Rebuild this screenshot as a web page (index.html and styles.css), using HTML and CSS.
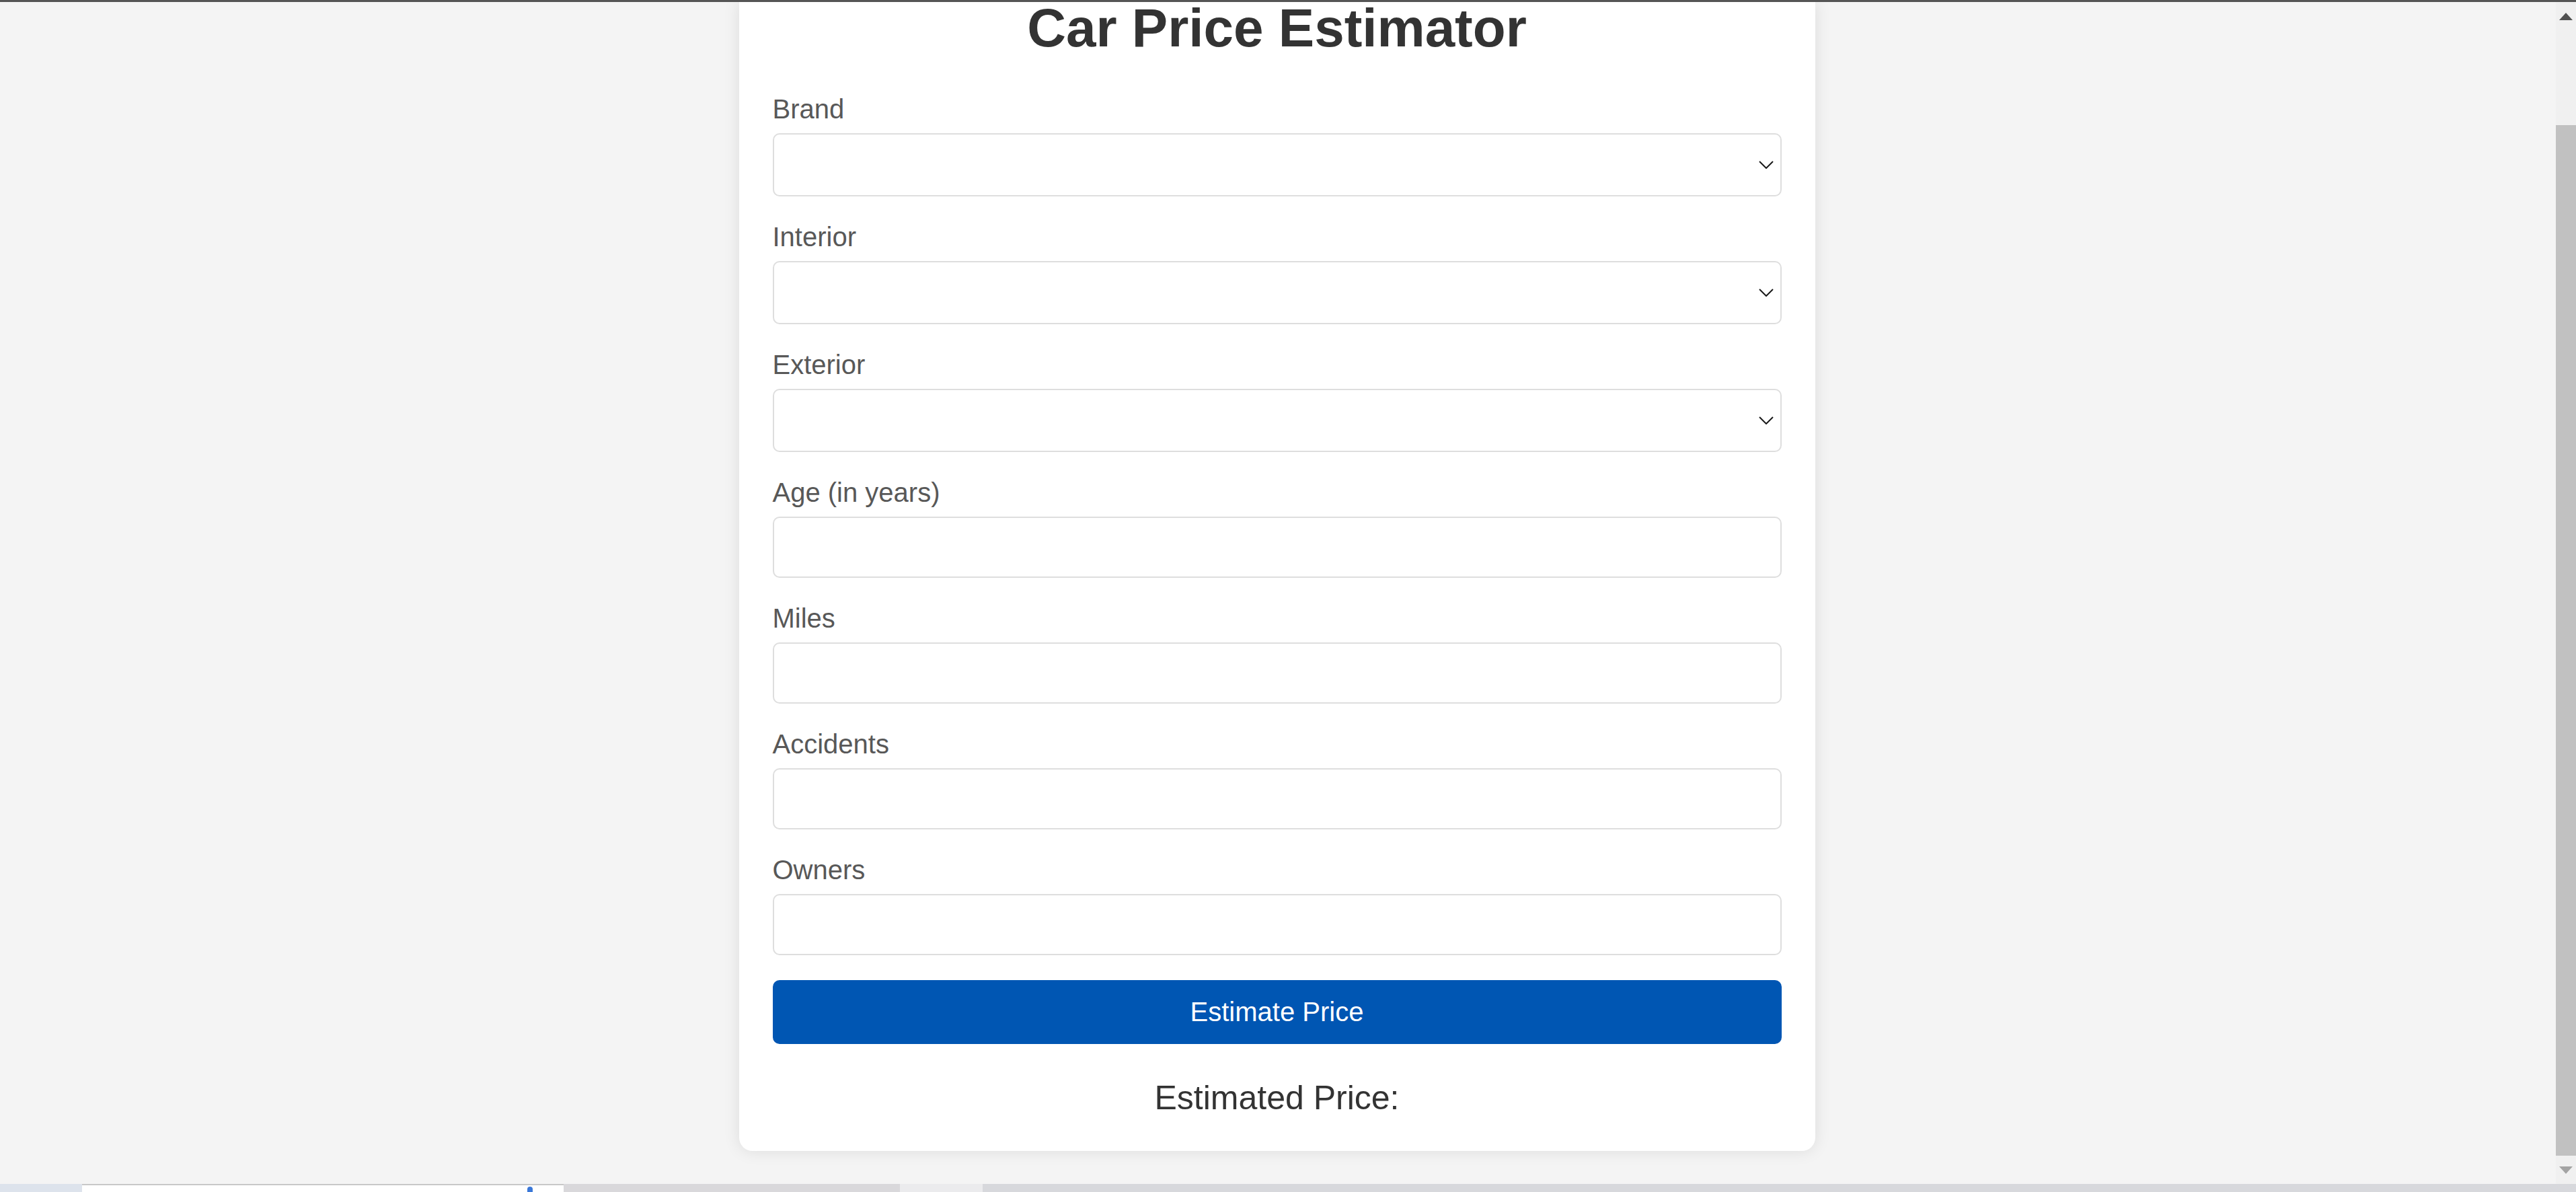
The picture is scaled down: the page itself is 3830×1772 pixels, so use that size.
FILE: index.html
```html
<!DOCTYPE html>
<html lang="en">
<head>
<meta charset="utf-8">
<title>Car Price Estimator</title>
<link rel="stylesheet" href="styles.css">
</head>
<body>
<div class="topbar"></div>
<div class="viewport">
  <main class="page">
    <div class="card">
      <h1 class="title">Car Price Estimator</h1>
      <form class="form">
        <div class="group">
          <label class="label" for="brand">Brand</label>
          <div class="select-wrap">
            <select id="brand" class="field select"></select>
            <svg class="chevron" width="22" height="12" viewBox="0 0 22 12"><path d="M1 1 L11 11 L21 1" fill="none" stroke="#1a1a1a" stroke-width="2"/></svg>
          </div>
        </div>
        <div class="group">
          <label class="label" for="interior">Interior</label>
          <div class="select-wrap">
            <select id="interior" class="field select"></select>
            <svg class="chevron" width="22" height="12" viewBox="0 0 22 12"><path d="M1 1 L11 11 L21 1" fill="none" stroke="#1a1a1a" stroke-width="2"/></svg>
          </div>
        </div>
        <div class="group">
          <label class="label" for="exterior">Exterior</label>
          <div class="select-wrap">
            <select id="exterior" class="field select"></select>
            <svg class="chevron" width="22" height="12" viewBox="0 0 22 12"><path d="M1 1 L11 11 L21 1" fill="none" stroke="#1a1a1a" stroke-width="2"/></svg>
          </div>
        </div>
        <div class="group">
          <label class="label" for="age">Age (in years)</label>
          <input id="age" class="field input" type="text">
        </div>
        <div class="group">
          <label class="label" for="miles">Miles</label>
          <input id="miles" class="field input" type="text">
        </div>
        <div class="group">
          <label class="label" for="accidents">Accidents</label>
          <input id="accidents" class="field input" type="text">
        </div>
        <div class="group">
          <label class="label" for="owners">Owners</label>
          <input id="owners" class="field input" type="text">
        </div>
        <button type="button" class="button">Estimate Price</button>
      </form>
      <p class="result">Estimated Price:</p>
    </div>
  </main>
  <div class="scrollbar">
    <div class="sb-btn"><span class="tri-up"></span></div>
    <div class="sb-space"></div>
    <div class="sb-thumb"></div>
    <div class="sb-btn"><span class="tri-down"></span></div>
  </div>
</div>
<div class="taskbar">
  <div class="tb tb-a"></div>
  <div class="tb tb-b"><span class="tb-dot"></span></div>
  <div class="tb tb-c"></div>
  <div class="tb tb-d"></div>
  <div class="tb tb-e"></div>
</div>
</body>
</html>
```
FILE: styles.css
```css
html, body {
  margin: 0;
  padding: 0;
}
body {
  width: 3830px;
  height: 1772px;
  overflow: hidden;
  display: flex;
  flex-direction: column;
  background: #f4f4f4;
  font-family: "Liberation Sans", Arial, sans-serif;
}
.topbar {
  height: 3px;
  background: #555555;
  flex: none;
}
.viewport {
  flex: 1;
  display: flex;
  min-height: 0;
}
.page {
  flex: 1;
  display: flex;
  justify-content: center;
  align-items: flex-start;
  padding-right: 3px;
  overflow: hidden;
}
.card {
  width: 1600px;
  box-sizing: border-box;
  padding: 0 50px 50px;
  background: #ffffff;
  border-radius: 0 0 20px 20px;
  box-shadow: 0 0 25px rgba(0, 0, 0, 0.1);
}
.title {
  margin: 0 0 58px;
  font-size: 80px;
  line-height: 78px;
  font-weight: bold;
  color: #333333;
  text-align: center;
}
.form {
  margin: 0;
}
.group {
  margin-bottom: 37px;
}
.label {
  display: block;
  font-size: 40px;
  line-height: 46px;
  margin-bottom: 13px;
  color: #585858;
}
.field {
  display: block;
  width: 100%;
  box-sizing: border-box;
  margin: 0;
  background: #ffffff;
  border: 2px solid #dedede;
  border-radius: 10px;
  font-family: inherit;
  font-size: 40px;
  padding: 0 20px;
  outline: none;
}
.select-wrap {
  position: relative;
}
.select {
  height: 94px;
  appearance: none;
  -webkit-appearance: none;
}
.chevron {
  position: absolute;
  right: 12px;
  top: 41px;
}
.input {
  height: 91px;
}
.button {
  display: block;
  width: 100%;
  height: 95px;
  margin: 0;
  border: none;
  border-radius: 10px;
  background: #0056b3;
  color: #ffffff;
  font-family: inherit;
  font-size: 40px;
}
.result {
  margin: 51px 0 0;
  font-size: 50px;
  line-height: 58px;
  color: #333333;
  text-align: center;
}
.scrollbar {
  width: 30px;
  flex: none;
  display: flex;
  flex-direction: column;
  background: #f0f0f0;
}
.sb-btn {
  height: 42px;
  flex: none;
  display: flex;
  align-items: center;
  justify-content: center;
}
.sb-space {
  height: 141px;
  flex: none;
}
.sb-thumb {
  flex: 1;
  background: #c1c1c1;
}
.tri-up {
  width: 0;
  height: 0;
  border-left: 10px solid transparent;
  border-right: 10px solid transparent;
  border-bottom: 11px solid #505050;
}
.tri-down {
  width: 0;
  height: 0;
  border-left: 10px solid transparent;
  border-right: 10px solid transparent;
  border-top: 11px solid #a3a3a3;
}
.taskbar {
  height: 12px;
  flex: none;
  display: flex;
}
.tb {
  height: 100%;
}
.tb-a {
  width: 122px;
  background: #dde3ec;
}
.tb-b {
  width: 716px;
  box-sizing: border-box;
  background: #ffffff;
  border-top: 2px solid #c8c8c8;
  display: flex;
  justify-content: flex-end;
  padding-right: 46px;
}
.tb-dot {
  width: 8px;
  height: 8px;
  margin-top: 2px;
  border-radius: 4px 4px 0 0;
  background: #3b78d8;
}
.tb-c {
  width: 500px;
  background: #d9d8db;
}
.tb-d {
  width: 123px;
  background: #ebebed;
}
.tb-e {
  flex: 1;
  background: #d7d8dc;
}
```
